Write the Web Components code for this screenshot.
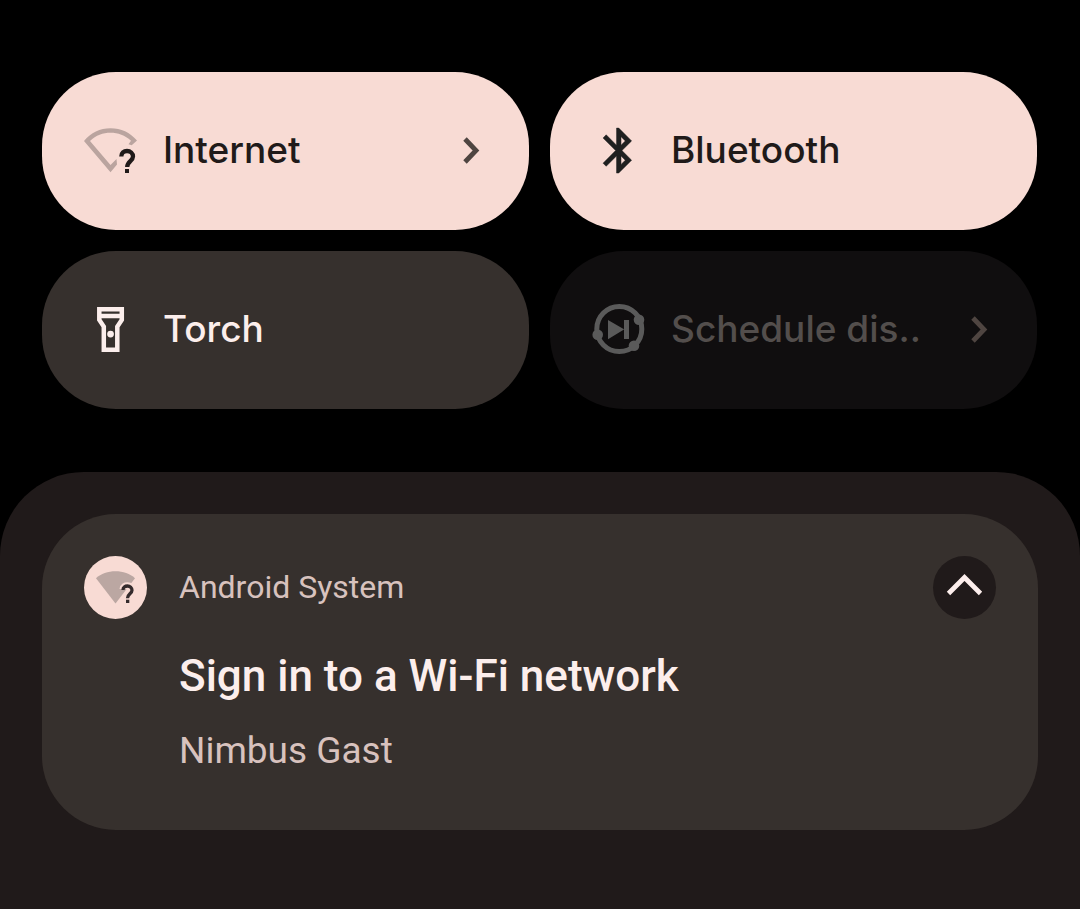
<!DOCTYPE html>
<html lang="en-GB">
<head>
<meta charset="utf-8">
<meta name="viewport" content="width=device-width, initial-scale=1">
<title>Quick settings</title>
<style>
  body { margin: 0; background: #000; font-family: Roboto, Inter, sans-serif; }
</style>
</head>
<body>
<shade-screen>
  <quick-tile slot="tiles" icon="wifi" label="Internet" state="on" more></quick-tile>
  <quick-tile slot="tiles" icon="bluetooth" label="Bluetooth" state="on"></quick-tile>
  <quick-tile slot="tiles" icon="torch" label="Torch" state="off"></quick-tile>
  <quick-tile slot="tiles" icon="schedule" label="Schedule dis.." state="unavailable" more></quick-tile>
  <shade-notification>
    <span slot="app">Android System</span>
    <span slot="title">Sign in to a Wi-Fi network</span>
    <span slot="text">Nimbus Gast</span>
  </shade-notification>
</shade-screen>

<script>
const ICONS = {
  wifi: `<svg viewBox="0 0 54 54" aria-hidden="true">
    <path fill="#baa49f" d="M0 17C7 8.500 16 4.300 26.500 4.300S46 8.500 53 16.500L47.700 21.300L44.500 20.300L47 16.800C41 11 34 8.700 26.500 8.700S12 11 6 17L26.500 41L32.500 35L33 40.500L26.500 48.300Z"/>
    <path fill="none" stroke="#201a19" stroke-width="4.300" d="M37.300 32.500C37.300 29 39.800 27 43 27C46.300 27 49 29.300 49 32.500C49 37 43.200 37.400 43.200 43"/>
    <path fill="#201a19" d="M41 45h4v4h-4z"/></svg>`,
  bluetooth: `<svg viewBox="0.1 0.2 24 24" aria-hidden="true"><path fill="#1f2020" stroke="#1f2020" stroke-width="0.2" d="M17.710 7.710L12 2h-1v7.590L6.410 5 5 6.410 10.590 12 5 17.590 6.410 19 11 14.410V22h1l5.710-5.710-4.300-4.290 4.300-4.290zM13 5.830l1.880 1.880L13 9.590V5.830zm1.880 10.460L13 18.170v-3.760l1.880 1.880z"/></svg>`,
  torch: `<svg viewBox="0.2 0.2 24 24" aria-hidden="true"><path fill="currentColor" d="M18 2H6v6l2 3v11h8V11l2-3V2zM16 4v1H8V4h8zM14 10.400V20h-4v-9.610l-2-3V7h8v.390L14 10.400z"/><circle fill="currentColor" cx="12" cy="14" r="1.500"/></svg>`,
  schedule: `<svg viewBox="0 0 54 54" aria-hidden="true"><g fill="#5a5a5a">
    <circle cx="27.300" cy="26" r="22.500" fill="none" stroke="#5a5a5a" stroke-width="5"/>
    <circle cx="47" cy="16.700" r="5.300"/><circle cx="42" cy="42.700" r="5.300"/><circle cx="5.700" cy="31.700" r="5.300"/>
    <path d="M16 17L32 26.300V17h5v19h-5v-9.400L16 36.300z"/></g></svg>`
};

class QuickTile extends HTMLElement {
  constructor() {
    super();
    this.attachShadow({ mode: 'open' });
  }
  connectedCallback() {
    const state = this.getAttribute('state');
    this.shadowRoot.innerHTML = `
      <style>
        :host { display: block; min-width: 0; }
        button {
          display: flex; align-items: center; gap: 25px;
          box-sizing: border-box; width: 100%; min-height: 158px; padding: 0 42px;
          border: 0; border-radius: 74px;
          background: #36302d; color: #fceeec;
          font: 500 37px/48px Inter, Roboto, sans-serif; text-align: left;
        }
        :host([state="on"]) button { background: #f8dbd4; color: #201a19; }
        :host([state="unavailable"]) button { background: #100e0f; color: #534e4c; }
        svg { display: block; width: 54px; height: 54px; flex: none; }
        .label { flex: 1; min-width: 0; padding-bottom: 2px; white-space: nowrap; }
        svg.chevron { width: 24px; height: 32px; color: #4f4541; }
      </style>
      <button type="button" ${state === 'unavailable' ? 'disabled' : `aria-pressed="${state === 'on'}"`}>
        ${ICONS[this.getAttribute('icon')]}
        <span class="label"></span>
        ${this.hasAttribute('more') ? `<svg class="chevron" viewBox="0 0 24 32" aria-hidden="true"><path fill="none" stroke="currentColor" stroke-width="4.800" d="M2 4L13 15.500L2 27"/></svg>` : ''}
      </button>`;
    this.shadowRoot.querySelector('.label').textContent = this.getAttribute('label');
  }
}

class ShadeNotification extends HTMLElement {
  constructor() {
    super();
    this.attachShadow({ mode: 'open' }).innerHTML = `
      <style>
        :host { display: block; }
        article {
          display: grid; grid-template-columns: 63px 1fr 63px; column-gap: 32px;
          padding: 42px 42px 55px; border-radius: 74px;
          background: #36302d; color: #d8c2be;
        }
        svg { display: block; width: 63px; height: 63px; }
        .app { align-self: center; padding-bottom: 2px; font-size: 32px; line-height: 40px; }
        .body { grid-column: 2; display: flex; flex-direction: column; gap: 23px; padding-top: 29px; }
        h2 { margin: 0; color: #fceeec; font-size: 44px; font-weight: 500; line-height: 56px; }
        p { margin: 0; font-size: 37px; line-height: 48px; }
        button { width: 63px; height: 63px; padding: 0; border: 0; border-radius: 50%; background: #201a1a; color: #fceeec; }
      </style>
      <article>
        <svg viewBox="0 0 63 63" aria-hidden="true">
          <circle cx="31.500" cy="31.500" r="31.500" fill="#f8dbd4"/>
          <path fill="#bba7a2" d="M12 22.300C17 17.500 24 15.300 31.500 15.300S46 17.500 51 22.300L31.500 47.500Z"/>
          <g fill="none" stroke="#f8dbd4" stroke-width="7"><path d="M39 33C39 31 41 29.800 43.500 29.800S48 31.500 48 34C48 37.500 43.500 38 43.500 42.500V48"/></g>
          <path fill="none" stroke="#342b2c" stroke-width="3.300" d="M39 34C39 31.500 41 30 43.500 30S48 31.600 48 34.300C48 37.800 43.500 38 43.500 42.300"/>
          <path fill="#342b2c" d="M42 43.700h3.300v3.300h-3.300z"/>
        </svg>
        <span class="app"><slot name="app"></slot></span>
        <button type="button" aria-label="Collapse">
          <svg viewBox="0 0 63 63" aria-hidden="true"><path fill="none" stroke="currentColor" stroke-width="4.800" d="M15.500 37.500L31.500 21.500L47.500 37.500"/></svg>
        </button>
        <div class="body">
          <h2><slot name="title"></slot></h2>
          <p><slot name="text"></slot></p>
        </div>
      </article>`;
  }
}

class ShadeScreen extends HTMLElement {
  constructor() {
    super();
    this.attachShadow({ mode: 'open' }).innerHTML = `
      <style>
        :host { display: flex; flex-direction: column; gap: 63px; box-sizing: border-box; min-height: 100vh; padding-top: 72px; }
        .tiles { display: grid; grid-template-columns: 1fr 1fr; gap: 21px; padding: 0 43px 0 42px; }
        .notifications { flex: 1; padding: 42px 42px 0; border-radius: 84px 84px 0 0; background: #201a1a; }
      </style>
      <section class="tiles" aria-label="Quick settings"><slot name="tiles"></slot></section>
      <section class="notifications" aria-label="Notifications"><slot></slot></section>`;
  }
}

customElements.define('quick-tile', QuickTile);
customElements.define('shade-notification', ShadeNotification);
customElements.define('shade-screen', ShadeScreen);
</script>
</body>
</html>
